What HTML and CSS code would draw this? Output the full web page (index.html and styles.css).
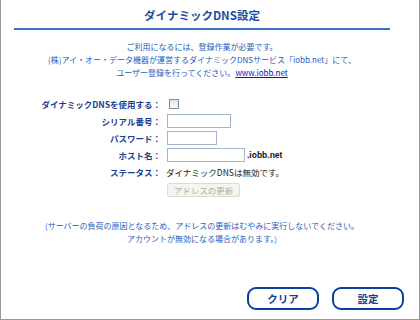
FILE: index.html
```html
<!DOCTYPE html>
<html>
  <head>
    <title>ダイナミックDNS設定</title>
    <link rel="stylesheet" href="styles.css">
  </head>
  <body>
    <div class="frame">
      <div class="content">
        <h1 class="title">ダイナミックDNS設定</h1>

        <p class="intro">
          ご利用になるには、登録作業が必要です。<br>
          (株)アイ・オー・データ機器が運営するダイナミックDNSサービス「iobb.net」にて、<br>
          ユーザー登録を行ってください。<a href="#">www.iobb.net</a>
        </p>

        <form class="ddns-form">
          <label class="lbl" for="use">ダイナミックDNSを使用する：</label>
          <div class="ctl"><input type="checkbox" id="use" class="chk"></div>

          <label class="lbl" for="serial">シリアル番号：</label>
          <div class="ctl"><input type="text" id="serial" class="txt serial"></div>

          <label class="lbl" for="pass">パスワード：</label>
          <div class="ctl"><input type="password" id="pass" class="txt pass"></div>

          <label class="lbl" for="host">ホスト名：</label>
          <div class="ctl"><input type="text" id="host" class="txt host"><span class="domain">.iobb.net</span></div>

          <span class="lbl">ステータス：</span>
          <div class="ctl status">ダイナミックDNSは無効です。</div>

          <span class="lbl"></span>
          <div class="ctl"><button type="button" class="update" disabled>アドレスの更新</button></div>
        </form>

        <p class="note">
          (サーバーの負荷の原因となるため、アドレスの更新はむやみに実行しないでください。<br>
          アカウントが無効になる場合があります。)
        </p>
      </div>

      <div class="actions">
        <button type="button" class="btn">クリア</button>
        <button type="button" class="btn">設定</button>
      </div>
    </div>
  </body>
</html>
```

FILE: styles.css
```css
body {
  margin: 0;
  padding: 0;
  font-family: "Noto Sans CJK JP", "Noto Sans", sans-serif;
  background: #fff;
}

.frame {
  width: 418px;
  height: 319px;
  border: 1px solid #999;
  border-top: none;
  display: flex;
  flex-direction: column;
}

.content {
  margin-left: 13px;
  width: 376px;
}

.title {
  margin: 0;
  height: 28px;
  line-height: 30px;
  font-size: 11.5px;
  font-weight: bold;
  color: #1d4c9e;
  text-align: center;
  border-bottom: 2px solid #3572c4;
}

.intro {
  margin: 10px 0 0;
  font-size: 8px;
  line-height: 13px;
  color: #2a5cbc;
  text-align: center;
}

.intro a {
  color: #1010c0;
  text-decoration: underline;
}

.ddns-form {
  display: grid;
  grid-template-columns: 147px 1fr;
  column-gap: 6px;
  margin-top: 16px;
  grid-auto-rows: 17px;
  align-items: center;
}

.lbl {
  text-align: right;
  font-size: 8.5px;
  font-weight: bold;
  color: #1c3f94;
  white-space: nowrap;
}

.ctl {
  display: flex;
  align-items: center;
  font-size: 8.5px;
}

.chk {
  appearance: none;
  width: 10px;
  height: 10px;
  margin: 0 0 0 2px;
  border: 1px solid #7a8cab;
  background: linear-gradient(#e2e2de, #fbfbfa);
}

.txt {
  height: 14px;
  box-sizing: border-box;
  border: 1px solid #a5b5cc;
  padding: 0;
  margin: 0;
}

.serial { width: 64px; }
.pass { width: 50px; }
.host { width: 78px; }

.domain {
  margin-left: 2px;
  font-weight: bold;
  color: #111;
  font-family: "Liberation Sans", sans-serif;
}

.status {
  color: #222;
  margin-left: -1px;
}

.update {
  width: 73px;
  height: 14px;
  margin-top: 2px;
  padding: 0;
  font-family: inherit;
  font-size: 8.5px;
  color: #b0b0a8;
  background: #f5f4ef;
  border: 1px solid #dcdbd2;
  border-radius: 2px;
}

.note {
  margin: 22px 0 0;
  font-size: 8px;
  line-height: 13px;
  color: #2a5cbc;
  text-align: center;
}

.actions {
  margin-top: auto;
  margin-bottom: 9px;
  display: flex;
  justify-content: flex-end;
  gap: 13px;
  padding-right: 15px;
}

.btn {
  width: 72px;
  height: 23px;
  padding: 0;
  font-family: inherit;
  font-size: 10.5px;
  font-weight: bold;
  color: #173f8f;
  background: #fff;
  border: 2.5px solid #0a3f9e;
  border-radius: 9px;
}
```
